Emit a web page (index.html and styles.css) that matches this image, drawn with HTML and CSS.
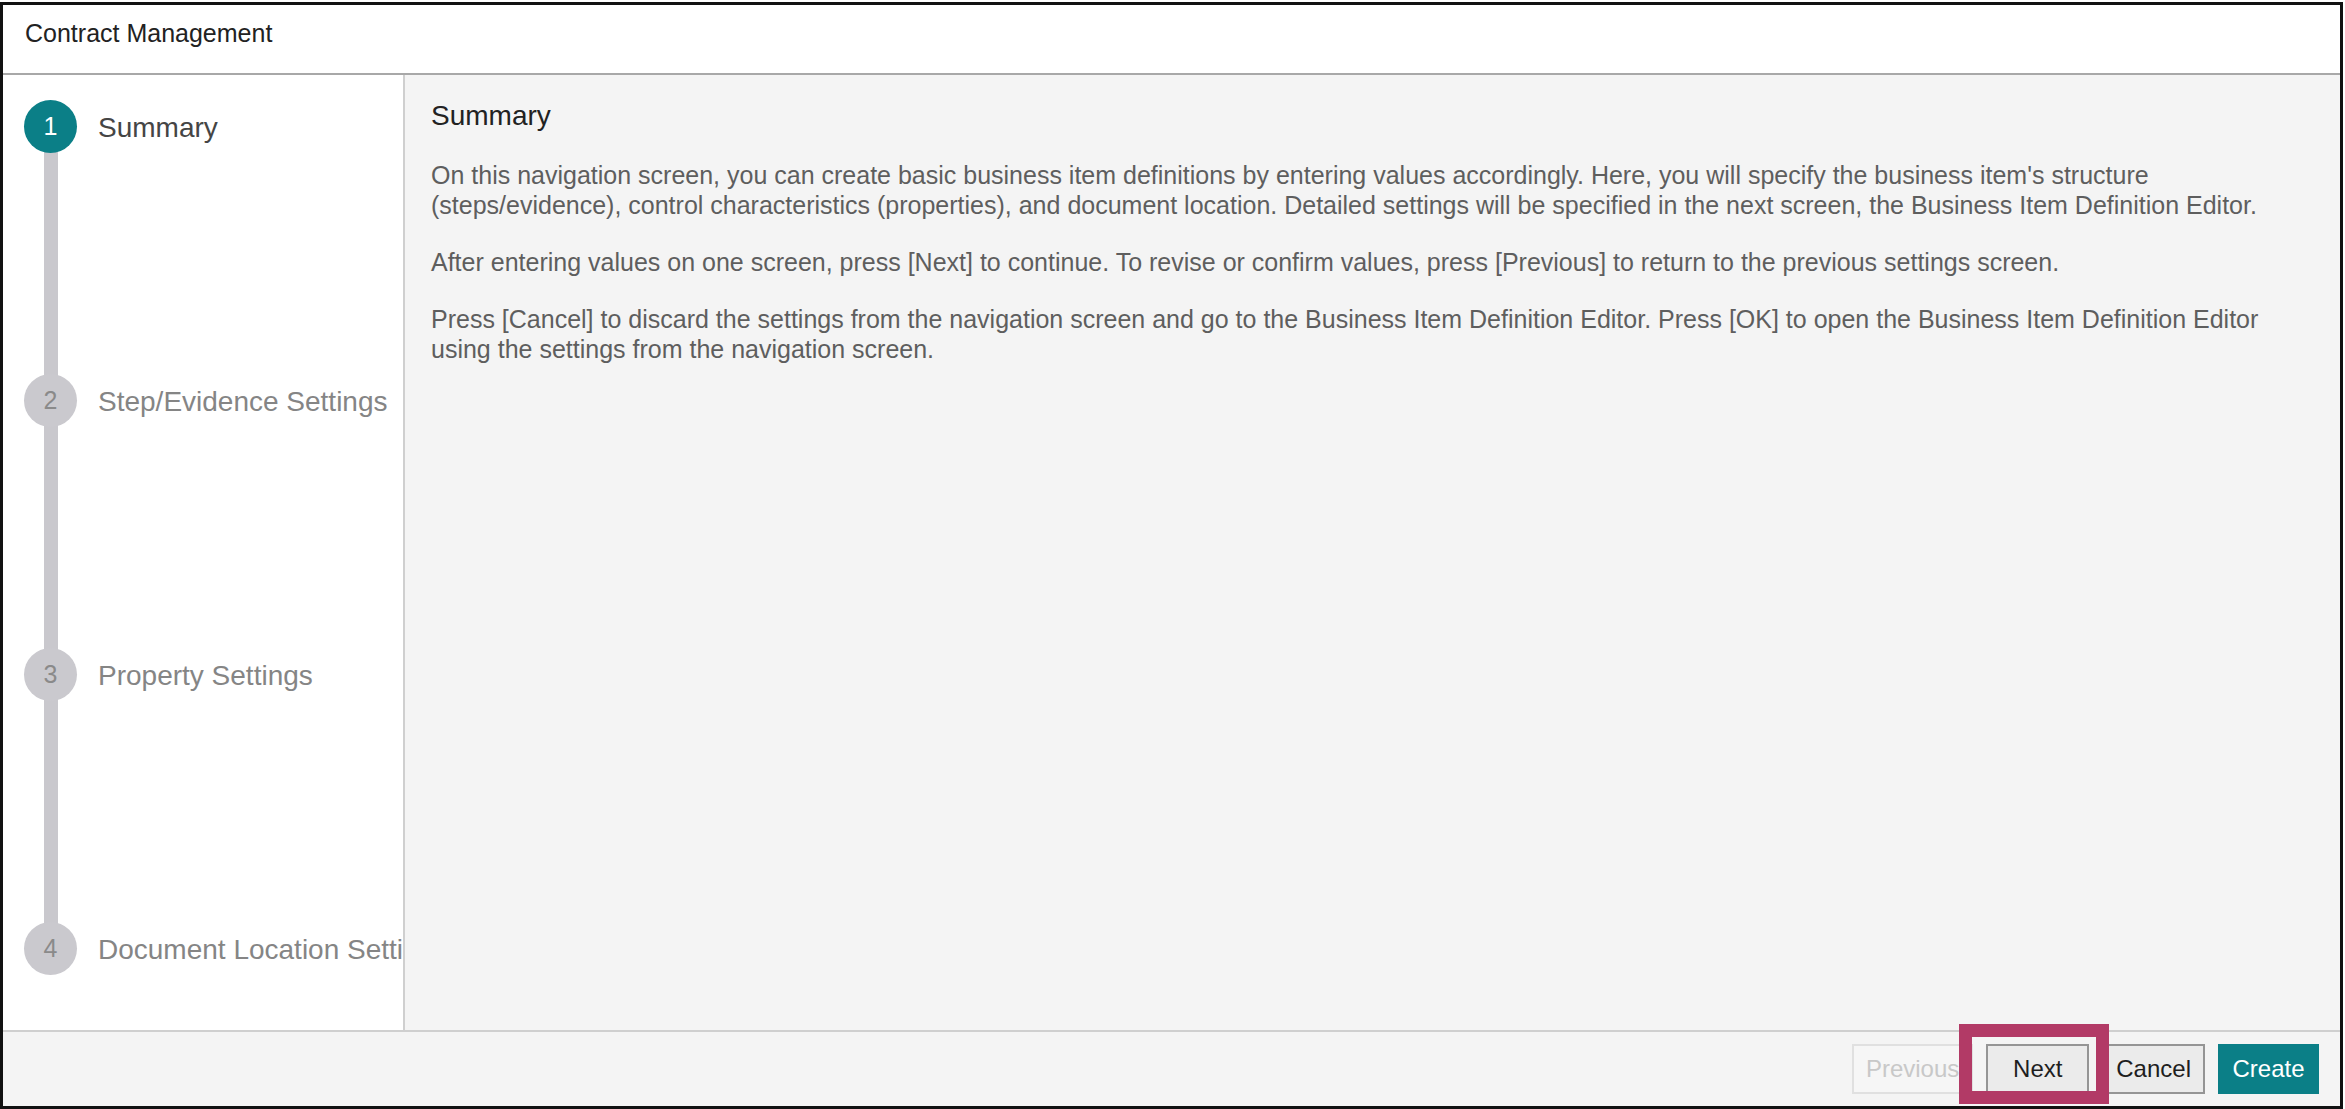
FILE: index.html
```html
<!DOCTYPE html>
<html lang="en">
<head>
<meta charset="utf-8">
<title>Contract Management</title>
<link rel="stylesheet" href="styles.css">
</head>
<body>
<div class="frame">
  <header class="header">Contract Management</header>
  <div class="main">
    <nav class="sidebar">
      <div class="step active"><span class="num">1</span><span class="label">Summary</span></div>
      <div class="step"><span class="num">2</span><span class="label">Step/Evidence Settings</span></div>
      <div class="step"><span class="num">3</span><span class="label">Property Settings</span></div>
      <div class="step last"><span class="num">4</span><span class="label">Document Location Settings</span></div>
    </nav>
    <section class="content">
      <h2 class="title">Summary</h2>
      <p>On this navigation screen, you can create basic business item definitions by entering values accordingly. Here, you will specify the business item's structure (steps/evidence), control characteristics (properties), and document location. Detailed settings will be specified in the next screen, the Business Item Definition Editor.</p>
      <p>After entering values on one screen, press [Next] to continue. To revise or confirm values, press [Previous] to return to the previous settings screen.</p>
      <p>Press [Cancel] to discard the settings from the navigation screen and go to the Business Item Definition Editor. Press [OK] to open the Business Item Definition Editor using the settings from the navigation screen.</p>
    </section>
  </div>
  <footer class="footer">
    <button class="btn disabled">Previous</button>
    <span class="highlight-wrap"><button class="btn">Next</button></span>
    <button class="btn">Cancel</button>
    <button class="btn primary">Create</button>
  </footer>
</div>
</body>
</html>
```
FILE: styles.css
```css
* { box-sizing: border-box; }
html, body { margin: 0; padding: 0; background: #fff; }
body {
  font-family: "Liberation Sans", Arial, sans-serif;
  padding: 2px 2px 0 0;
}
.frame {
  height: 1107px;
  border: 3px solid #111;
  display: flex;
  flex-direction: column;
  background: #fff;
}
.header {
  height: 70px;
  flex: none;
  padding: 13px 0 0 22px;
  font-size: 25px;
  line-height: 30px;
  color: #222;
  border-bottom: 2px solid #a8a8a8;
}
.main {
  flex: 1;
  display: flex;
  min-height: 0;
}
.sidebar {
  width: 402px;
  flex: none;
  border-right: 2px solid #cfcfcf;
  background: #fff;
  overflow: hidden;
  padding: 25px 0 0 21px;
  display: flex;
  flex-direction: column;
  gap: 222px;
}
.step {
  position: relative;
  display: flex;
  align-items: center;
  gap: 21px;
  height: 52px;
  white-space: nowrap;
}
.step::after {
  content: "";
  position: absolute;
  left: 20px;
  top: 26px;
  width: 14px;
  height: 274px;
  background: #c9c8cd;
  z-index: 0;
}
.step.last::after { display: none; }
.num {
  position: relative;
  z-index: 1;
  flex: none;
  width: 53px;
  height: 53px;
  border-radius: 50%;
  background: #cac9ce;
  color: #8a8a8a;
  font-size: 25px;
  display: flex;
  align-items: center;
  justify-content: center;
}
.label {
  font-size: 28px;
  line-height: 32px;
  padding-top: 3px;
  color: #858585;
}
.step.active .num { background: #0b7f87; color: #fff; }
.step.active .label { color: #454545; }
.content {
  flex: 1;
  background: #f4f4f4;
  padding: 25px 26px 0 26px;
}
.title {
  margin: 0 0 28px 0;
  font-size: 28px;
  line-height: 32px;
  font-weight: normal;
  color: #222;
}
.content p {
  margin: 0 0 27px 0;
  font-size: 25px;
  line-height: 30px;
  color: #5e5e5e;
}
.footer {
  flex: none;
  height: 76px;
  border-top: 2px solid #cfcfcf;
  background: #f4f4f4;
  display: flex;
  justify-content: flex-end;
  align-items: flex-start;
  gap: 13px;
  padding: 12px 21px 0 0;
}
.btn {
  font-family: "Liberation Sans", Arial, sans-serif;
  height: 50px;
  min-width: 101px;
  padding: 0 12px;
  font-size: 24px;
  color: #1e1e1e;
  background: #ebebeb;
  border: 2px solid #959595;
  border-radius: 0;
}
.btn.disabled {
  color: #c8c8c8;
  background: #f6f6f6;
  border-color: #e0e0e0;
}
.btn.primary {
  background: #0b7f87;
  border-color: #0b7f87;
  color: #fff;
}
.highlight-wrap {
  position: relative;
  display: flex;
}
.highlight-wrap .btn { min-width: 103px; }
.highlight-wrap::after {
  content: "";
  position: absolute;
  left: -27px;
  right: -20px;
  top: -20px;
  bottom: -10px;
  border: 13px solid #b23a66;
  z-index: 2;
  pointer-events: none;
}
```
